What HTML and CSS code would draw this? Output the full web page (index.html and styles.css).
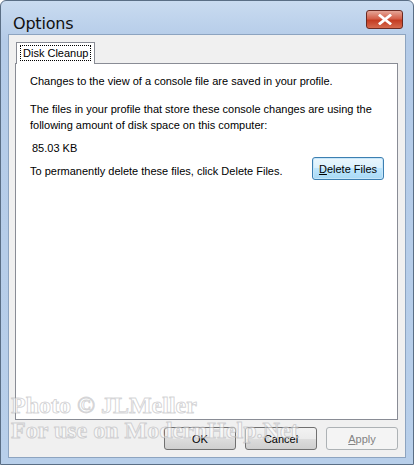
FILE: index.html
```html
<!DOCTYPE html>
<html>
<head>
<meta charset="utf-8">
<link rel="stylesheet" href="styles.css">
</head>
<body>
<div class="window">
  <div class="titlebar">
    <div class="title">Options</div>
    <div class="close"><svg width="14" height="11" viewBox="0 0 14 11"><path d="M2 1.5 L12 9.5 M12 1.5 L2 9.5" stroke="#fff" stroke-width="2.8" stroke-linecap="square"/></svg></div>
  </div>
  <div class="client">
    <div class="tabs">
      <div class="tab"><span class="focus">Disk Cleanup</span></div>
    </div>
    <div class="panel">
      <p class="l1">Changes to the view of a console file are saved in your profile.</p>
      <p class="l2">The files in your profile that store these console changes are using the<br>following amount of disk space on this computer:</p>
      <p class="size">85.03 KB</p>
      <div class="delrow">
        <span>To permanently delete these files, click Delete Files.</span>
        <button class="btn def"><u>D</u>elete Files</button>
      </div>
    </div>
    <div class="footer">
      <button class="btn">OK</button>
      <button class="btn">Cancel</button>
      <button class="btn dis"><u>A</u>pply</button>
    </div>
    <div class="wm"><div>Photo © JLMeller</div><div>For use on ModernHelp.Net</div></div>
  </div>
</div>
</body>
</html>
```
FILE: styles.css
```css
html, body { margin: 0; padding: 0; }
body { width: 414px; height: 465px; overflow: hidden; background: #fff; font-family: "Liberation Sans", sans-serif; }
.window {
  width: 414px; height: 465px; box-sizing: border-box;
  background: linear-gradient(#c9dbf0, #b4cbe8 40px, #b8cfea);
  border: 1px solid #5a6e85; border-radius: 6px 6px 0 0;
  display: flex; flex-direction: column; padding: 0 7px 6px 7px;
}
.titlebar { height: 33px; display: flex; align-items: flex-start; justify-content: space-between; }
.title { font-family: "DejaVu Sans", sans-serif; font-size: 16px; color: #111; margin: 15px 0 0 5px; letter-spacing: -0.2px; line-height: 16px; }
.close {
  width: 37px; height: 19px; margin-top: 9px; margin-right: 3px; box-sizing: border-box;
  border: 1px solid #6b2a22; border-radius: 3px;
  background: linear-gradient(#e5a698, #d4604a 45%, #c43c22 55%, #d66a4e);
  display: flex; align-items: center; justify-content: center;
}
.close svg { display: block; }
.client {
  flex: 1; background: #f0f0f0; position: relative;
  display: flex; flex-direction: column; padding: 7px 7px 0 6px;
  border: 1px solid #8da4c0;
}
.tabs { display: flex; height: 21px; }
.tab {
  box-sizing: border-box; margin-left: 1px; padding: 2px 3px 0 3px;
  background: #fff; border: 1px solid #898c95; border-bottom: none; position: relative; z-index: 1;
  margin-bottom: -1px; height: 22px;
}
.focus { display: block; border: 1px dotted #000; padding: 0 2px; font-size: 11px; line-height: 14px; color: #000; }
.panel {
  height: 357px; box-sizing: border-box; background: #fff; border: 1px solid #898c95;
  padding: 9px 14px 0 14px; font-size: 11px; color: #000; white-space: nowrap;
}
.panel p { margin: 0; line-height: 16px; }
.l1 { margin-bottom: 12px !important; }
.l2 { margin-bottom: 7px !important; }
.size { padding-left: 2px; margin-bottom: 1px !important; }
.delrow { display: flex; justify-content: space-between; align-items: center; margin-right: -1px; }
.delrow span { padding-top: 5px; }
.btn {
  width: 72px; height: 23px; box-sizing: border-box; font-family: "Liberation Sans", sans-serif; font-size: 11px;
  border: 1px solid #707070; border-radius: 3px; color: #000; padding: 0;
  background: linear-gradient(#f2f2f2, #ebebeb 50%, #dddddd 50%, #cfcfcf);
}
.btn u { text-decoration: underline; }
.def { border-color: #3c7fb1; background: linear-gradient(#eaf6fd, #d9f0fc 50%, #bee6fd 50%, #a7d9f5); box-shadow: inset 0 0 0 1px #c7e6f9; }
.dis { background: #f4f4f4; border-color: #adb2b5; color: #838383; }
.footer { display: flex; justify-content: flex-end; gap: 9px; padding-top: 7px; }
.wm {
  position: absolute; left: 2px; top: 358px; font-family: "Liberation Serif", serif; font-weight: bold;
  font-size: 24px; line-height: 25px; color: rgba(255,255,255,0.5); pointer-events: none;
  -webkit-text-stroke: 1px rgba(160,160,165,0.45);
}
```
